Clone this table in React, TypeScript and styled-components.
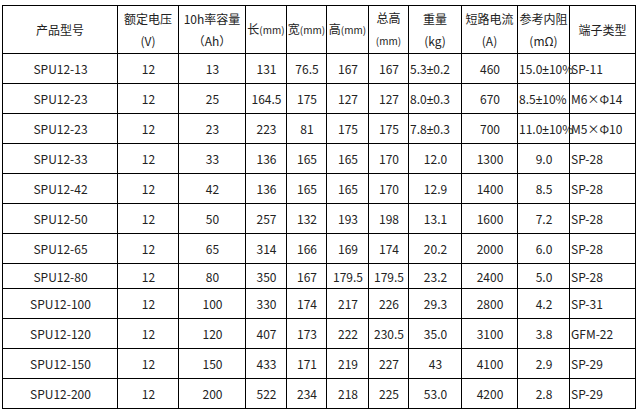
import styled, { createGlobalStyle } from 'styled-components'

const GlobalStyle = createGlobalStyle`
  body {
    margin: 0;
    background: #fff;
  }
`

const Page = styled.div`
  padding: 5px 0 0 2px;
  font-family: 'Noto Sans CJK SC', 'Noto Sans', sans-serif;
  font-size: 12px;
  color: #222;
`

const Table = styled.table`
  border-collapse: collapse;
  table-layout: fixed;
  width: 633px;
`

const HeadRow = styled.tr`
  height: 48px;
`

const Row = styled.tr<{ $short?: boolean }>`
  height: ${(p) => (p.$short ? 25 : 30)}px;
`

const Th = styled.th`
  border: 1px solid #000;
  padding: 0;
  font-weight: normal;
  line-height: 22px;
  text-align: center;
  vertical-align: middle;
  white-space: nowrap;
`

const Unit = styled.span`
  font-size: 10px;
`

const Td = styled.td<{ $align?: 'left' | 'center' }>`
  border: 1px solid #000;
  padding: 0 0 0 1px;
  text-align: ${(p) => p.$align ?? 'center'};
  vertical-align: middle;
  white-space: nowrap;
  overflow: visible;
`

// half-width plus-minus so the tolerance values keep inside their cell
const PlusMinus = styled.span`
  font-family: 'Liberation Sans', sans-serif;
`

const widths = [115, 61, 67, 41, 40, 42, 40, 53, 56, 52, 66]

type Battery = {
  model: string
  volt: string
  cap: string
  len: string
  wid: string
  hgt: string
  total: string
  weight: string
  current: string
  resist: string
  terminal: string
}

const rows: Battery[] = [
  { model: 'SPU12-13', volt: '12', cap: '13', len: '131', wid: '76.5', hgt: '167', total: '167', weight: '5.3±0.2', current: '460', resist: '15.0±10%', terminal: 'SP-11' },
  { model: 'SPU12-23', volt: '12', cap: '25', len: '164.5', wid: '175', hgt: '127', total: '127', weight: '8.0±0.3', current: '670', resist: '8.5±10%', terminal: 'M6×Φ14' },
  { model: 'SPU12-23', volt: '12', cap: '23', len: '223', wid: '81', hgt: '175', total: '175', weight: '7.8±0.3', current: '700', resist: '11.0±10%', terminal: 'M5×Φ10' },
  { model: 'SPU12-33', volt: '12', cap: '33', len: '136', wid: '165', hgt: '165', total: '170', weight: '12.0', current: '1300', resist: '9.0', terminal: 'SP-28' },
  { model: 'SPU12-42', volt: '12', cap: '42', len: '136', wid: '165', hgt: '165', total: '170', weight: '12.9', current: '1400', resist: '8.5', terminal: 'SP-28' },
  { model: 'SPU12-50', volt: '12', cap: '50', len: '257', wid: '132', hgt: '193', total: '198', weight: '13.1', current: '1600', resist: '7.2', terminal: 'SP-28' },
  { model: 'SPU12-65', volt: '12', cap: '65', len: '314', wid: '166', hgt: '169', total: '174', weight: '20.2', current: '2000', resist: '6.0', terminal: 'SP-28' },
  { model: 'SPU12-80', volt: '12', cap: '80', len: '350', wid: '167', hgt: '179.5', total: '179.5', weight: '23.2', current: '2400', resist: '5.0', terminal: 'SP-28' },
  { model: 'SPU12-100', volt: '12', cap: '100', len: '330', wid: '174', hgt: '217', total: '226', weight: '29.3', current: '2800', resist: '4.2', terminal: 'SP-31' },
  { model: 'SPU12-120', volt: '12', cap: '120', len: '407', wid: '173', hgt: '222', total: '230.5', weight: '35.0', current: '3100', resist: '3.8', terminal: 'GFM-22' },
  { model: 'SPU12-150', volt: '12', cap: '150', len: '433', wid: '171', hgt: '219', total: '227', weight: '43', current: '4100', resist: '2.9', terminal: 'SP-29' },
  { model: 'SPU12-200', volt: '12', cap: '200', len: '522', wid: '234', hgt: '218', total: '225', weight: '53.0', current: '4200', resist: '2.8', terminal: 'SP-29' },
]

// the first three rows carry tolerances, those sit flush left
const hasTolerance = (r: Battery) => r.weight.includes('±')

const withTolerance = (text: string) => {
  const [value, tol] = text.split('±')
  if (tol === undefined) return text
  return (
    <>
      {value}
      <PlusMinus>±</PlusMinus>
      {tol}
    </>
  )
}

export default function App() {
  return (
    <Page>
      <GlobalStyle />
      <Table>
        <colgroup>
          {widths.map((w, i) => (
            <col key={i} style={{ width: w }} />
          ))}
        </colgroup>
        <thead>
          <HeadRow>
            <Th>产品型号</Th>
            <Th>
              额定电压
              <br />
              (V)
            </Th>
            <Th>
              10h率容量
              <br />
              （Ah）
            </Th>
            <Th>
              长<Unit>(mm)</Unit>
            </Th>
            <Th>
              宽<Unit>(mm)</Unit>
            </Th>
            <Th>
              高<Unit>(mm)</Unit>
            </Th>
            <Th>
              总高
              <br />
              <Unit>(mm)</Unit>
            </Th>
            <Th>
              重量
              <br />
              (kg)
            </Th>
            <Th>
              短路电流
              <br />
              (A)
            </Th>
            <Th>
              参考内阻
              <br />
              (mΩ)
            </Th>
            <Th>端子类型</Th>
          </HeadRow>
        </thead>
        <tbody>
          {rows.map((r, i) => {
            const tol = hasTolerance(r)
            return (
              <Row key={i} $short={i === 7}>
                <Td>{r.model}</Td>
                <Td>{r.volt}</Td>
                <Td>{r.cap}</Td>
                <Td>{r.len}</Td>
                <Td>{r.wid}</Td>
                <Td>{r.hgt}</Td>
                <Td>{r.total}</Td>
                <Td $align={tol ? 'left' : 'center'}>{withTolerance(r.weight)}</Td>
                <Td>{r.current}</Td>
                <Td $align={tol ? 'left' : 'center'}>{withTolerance(r.resist)}</Td>
                <Td $align="left">{r.terminal}</Td>
              </Row>
            )
          })}
        </tbody>
      </Table>
    </Page>
  )
}
